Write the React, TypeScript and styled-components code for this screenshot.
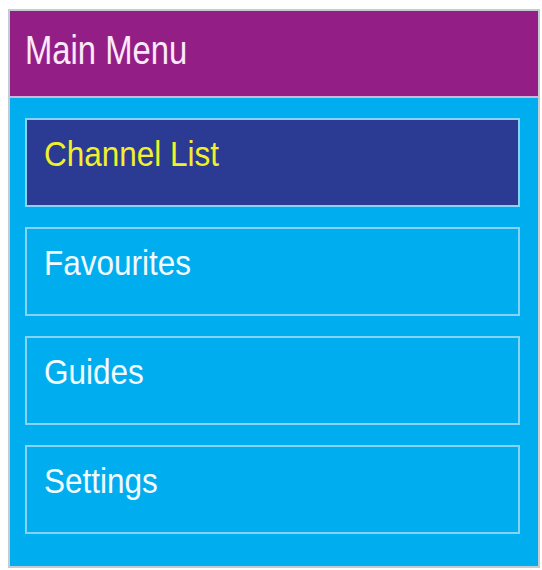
import React from "react";
import styled, { createGlobalStyle } from "styled-components";

const GlobalStyle = createGlobalStyle`
  html, body {
    margin: 0;
    padding: 0;
    background: #ffffff;
  }
  body {
    font-family: "Liberation Sans", Arial, sans-serif;
  }
`;

const Panel = styled("div")`
  box-sizing: border-box;
  margin: 9px 0 0 8px;
  width: 532px;
  height: 559px;
  border: 2px solid #c3cbd3;
  background-color: #00aeef;
  display: flex;
  flex-direction: column;
`;

const Header = styled("div")`
  box-sizing: border-box;
  height: 87px;
  padding: 19px 0 0 15px;
  background-color: #931f86;
  border-bottom: 2px solid #d2b3de;
`;

const Title = styled("span")`
  display: inline-block;
  font-size: 41px;
  line-height: 41px;
  color: #fbe9fb;
  transform: scaleX(0.8);
  transform-origin: left top;
  white-space: nowrap;
`;

const MenuList = styled("div")`
  display: flex;
  flex-direction: column;
  gap: 20px;
  padding: 20px 18px 0 15px;
`;

const MenuItem = styled("div")<{ active?: boolean }>`
  box-sizing: border-box;
  height: 89px;
  padding: 16px 0 0 17px;
  border: 2px solid #86d3f3;
  background-color: ${p => (p.active ? "#2b3a92" : "#00aeef")};
  color: ${p => (p.active ? "#f2f02a" : "#f2fbff")};
`;

const Label = styled("span")`
  display: inline-block;
  font-size: 35px;
  line-height: 35px;
  transform: scaleX(0.9);
  transform-origin: left top;
  white-space: nowrap;
`;

const items = ["Channel List", "Favourites", "Guides", "Settings"];

const App: React.FC = () => {
  return (
    <React.Fragment>
      <GlobalStyle />
      <Panel>
        <Header>
          <Title>Main Menu</Title>
        </Header>
        <MenuList>
          {items.map((item, i) => (
            <MenuItem key={item} active={i === 0}>
              <Label>{item}</Label>
            </MenuItem>
          ))}
        </MenuList>
      </Panel>
    </React.Fragment>
  );
};

export default App;
